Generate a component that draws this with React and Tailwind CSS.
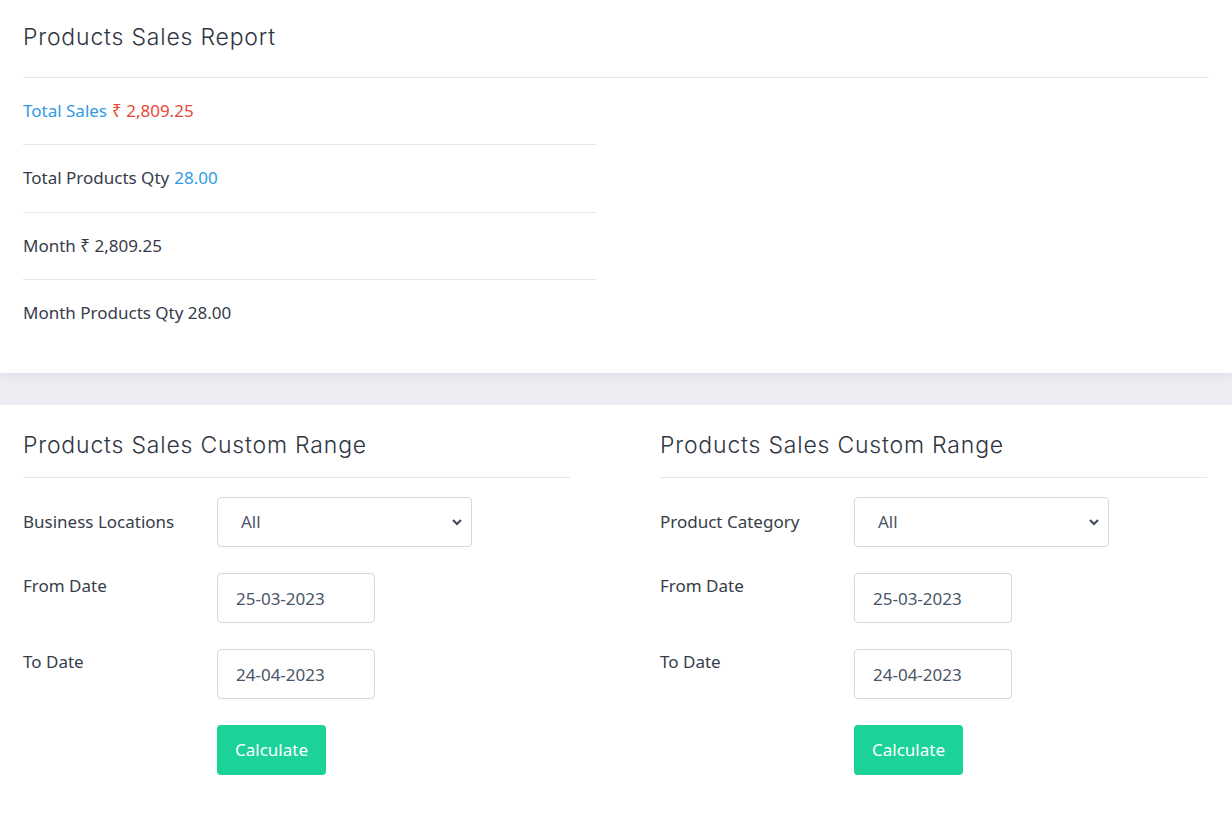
import React from 'react';

const body = { fontFamily: '"Noto Sans", "Open Sans", sans-serif' };
const head = { fontFamily: '"Inter", "Noto Sans", sans-serif' };

function RangeForm({ label }) {
  return (
    <div>
      <h2 className="text-[23px] font-light tracking-[0.035em] text-[#2f3542] pt-[23px] pb-[15px] border-b border-[#e3e5ea]" style={head}>
        Products Sales Custom Range
      </h2>
      <div className="grid grid-cols-[194px_1fr] gap-y-[26px] mt-[19px] text-[17px] text-[#363c4a]">
        <div className="flex items-center">{label}</div>
        <div className="relative w-[255px]">
          <select className="appearance-none w-full h-[50px] px-[23px] border border-[#d4d7de] rounded-[4px] bg-white text-[#4a5568] text-[17px] outline-none" style={body}>
            <option>All</option>
          </select>
          <svg className="absolute right-[9px] top-[20px] w-[12px] h-[10px]" viewBox="0 0 12 10" fill="none" stroke="#3d4656" strokeWidth="2">
            <path d="M2 3l4 4 4-4" />
          </svg>
        </div>

        <div>From Date</div>
        <input readOnly value="25-03-2023" className="w-[158px] h-[50px] px-[18px] border border-[#d4d7de] rounded-[4px] text-[#4a5568] text-[17px] outline-none" style={body} />

        <div>To Date</div>
        <input readOnly value="24-04-2023" className="w-[158px] h-[50px] px-[18px] border border-[#d4d7de] rounded-[4px] text-[#4a5568] text-[17px] outline-none" style={body} />

        <div></div>
        <div>
          <button className="h-[50px] px-[18px] rounded-[4px] bg-[#1bd398] text-white text-[17px]">Calculate</button>
        </div>
      </div>
    </div>
  );
}

export default function App() {
  return (
    <div className="min-h-[825px] bg-[#eceef3]" style={body}>
      <div className="bg-white px-[23px] pb-[26px] shadow-[0_4px_10px_rgba(0,0,0,0.06)]">
        <h1 className="text-[23px] font-light tracking-[0.035em] text-[#2f3542] pt-[20px] pb-[22px] border-b border-[#e3e5ea]" style={head}>
          Products Sales Report
        </h1>
        <div className="w-[573px] text-[17px] text-[#363c4a]">
          <div className="h-[67px] flex items-center border-b border-[#e3e5ea]">
            <span className="text-[#2f9be6]">Total Sales</span>
            <span className="text-[#e8483a] ml-[5px]">₹ 2,809.25</span>
          </div>
          <div className="h-[68px] flex items-center border-b border-[#e3e5ea]">
            Total Products Qty<span className="text-[#2f9be6] ml-[5px]">28.00</span>
          </div>
          <div className="h-[67px] flex items-center border-b border-[#e3e5ea]">Month ₹ 2,809.25</div>
          <div className="h-[67px] flex items-center">Month Products Qty 28.00</div>
        </div>
      </div>
      <div className="mt-[32px] bg-white px-[23px] pb-[60px] grid grid-cols-[547px_547px] gap-x-[90px]">
        <RangeForm label="Business Locations" />
        <RangeForm label="Product Category" />
      </div>
    </div>
  );
}
